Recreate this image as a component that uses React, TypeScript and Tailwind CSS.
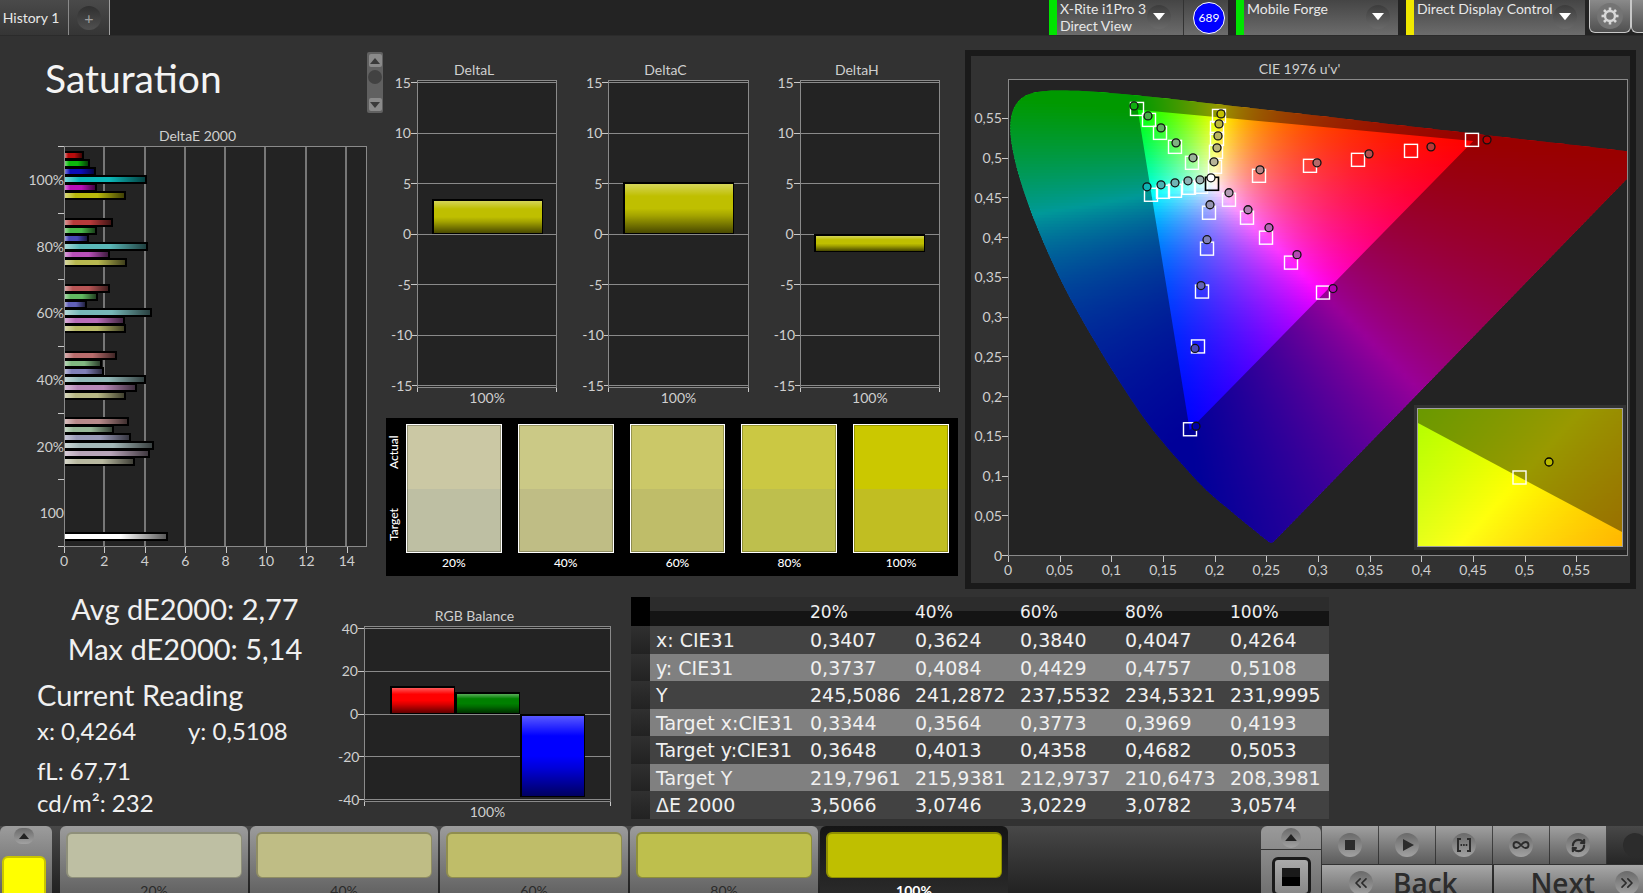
import { ReactNode } from "react";
import { ChevronsLeft, ChevronsRight, Infinity as InfinityIcon, RefreshCw } from "lucide-react";

const DE_GROUPS = [
    { label: "100%", bars: [[0.95, "#b80c0c"], [1.25, "#0cb80c"], [1.55, "#0c0cb8"], [4.08, "#0cb8b8"], [1.6, "#b80cb8"], [3.04, "#b8b80c"]] },
    { label: "80%", bars: [[2.4, "#b83a3a"], [1.6, "#48b848"], [1.2, "#4848b8"], [4.13, "#5ab8b8"], [2.25, "#b84fb8"], [3.08, "#b8b850"]] },
    { label: "60%", bars: [[2.25, "#b85555"], [1.65, "#60b860"], [1.1, "#6060b8"], [4.33, "#76b8b8"], [3.0, "#b86cb8"], [3.04, "#b8b866"]] },
    { label: "40%", bars: [[2.6, "#b86c6c"], [1.85, "#80b880"], [1.95, "#8080b8"], [4.03, "#92b8b8"], [3.6, "#b888b8"], [3.04, "#b8b885"]] },
    { label: "20%", bars: [[3.2, "#b88a8a"], [2.45, "#98b898"], [3.3, "#9a9ab8"], [4.43, "#a4b8b8"], [4.23, "#b8a4b8"], [3.49, "#b8b8a0"]] },
    { label: "100", bars: [[0, ""], [0, ""], [0, ""], [0, ""], [0, ""], [0, ""], [5.12, "#ffffff"]] },
] as { label: string; bars: [number, string][] }[];

const SWATCHES = [
    { label: "20%", actual: "#cbc8a4", target: "#bebfa3" },
    { label: "40%", actual: "#cbc986", target: "#bfbd85" },
    { label: "60%", actual: "#cbc868", target: "#bfbd69" },
    { label: "80%", actual: "#cbc843", target: "#bebf4d" },
    { label: "100%", actual: "#cbc800", target: "#c1be22" },
];

const PATCHES = [
    { label: "20%", color: "#bebfa3" },
    { label: "40%", color: "#bfbd85" },
    { label: "60%", color: "#bfbd69" },
    { label: "80%", color: "#bebf4d" },
    { label: "100%", color: "#bfbf00" },
];

const TABLE = [
    ["x: CIE31", "0,3407", "0,3624", "0,3840", "0,4047", "0,4264"],
    ["y: CIE31", "0,3737", "0,4084", "0,4429", "0,4757", "0,5108"],
    ["Y", "245,5086", "241,2872", "237,5532", "234,5321", "231,9995"],
    ["Target x:CIE31", "0,3344", "0,3564", "0,3773", "0,3969", "0,4193"],
    ["Target y:CIE31", "0,3648", "0,4013", "0,4358", "0,4682", "0,5053"],
    ["Target Y", "219,7961", "215,9381", "212,9737", "210,6473", "208,3981"],
    ["ΔE 2000", "3,5066", "3,0746", "3,0229", "3,0782", "3,0574"],
];

/* ---------- CIE helpers ---------- */

const PLOT_W = 618;
const PLOT_H = 476;

// spectral locus, CIE 1931 xy
const LOCUS = [
    [0.1741, 0.005], [0.1714, 0.0051], [0.1644, 0.0109], [0.1566, 0.0177], [0.144, 0.0297], [0.1241, 0.0578],
    [0.1096, 0.0868], [0.0913, 0.1327], [0.0687, 0.2007], [0.0454, 0.295], [0.0235, 0.4127], [0.0082, 0.5384],
    [0.0039, 0.6548], [0.0139, 0.7502], [0.0389, 0.812], [0.0743, 0.8338], [0.1142, 0.8262], [0.1547, 0.8059],
    [0.2296, 0.7543], [0.3016, 0.6923], [0.3731, 0.6245], [0.4441, 0.5547], [0.5125, 0.4866], [0.5752, 0.4242],
    [0.627, 0.3725], [0.6915, 0.3083], [0.719, 0.2809], [0.7347, 0.2653],
];

function toPlot(x: number, y: number) {
    const d = -2 * x + 12 * y + 3;
    return [((4 * x) / d / 0.6) * PLOT_W, PLOT_H - ((9 * y) / d / 0.6) * PLOT_H];
}

// brightest RGB mix for a chromaticity, left linear
function xyColor(x: number, y: number) {
    const yy = Math.max(y, 0.0001);
    const X = x / yy;
    const Z = (1 - x - yy) / yy;
    const rgb = [
        3.2406 * X - 1.5372 - 0.4986 * Z,
        -0.9689 * X + 1.8758 + 0.0415 * Z,
        0.0557 * X - 0.204 + 1.057 * Z,
    ].map((c) => Math.max(c, 0));
    const max = Math.max(...rgb) || 1;
    return `rgb(${rgb.map((c) => Math.round((255 * c) / max)).join(",")})`;
}

function uvColor(px: number, py: number) {
    const u = (px / PLOT_W) * 0.6;
    const v = ((PLOT_H - py) / PLOT_H) * 0.6;
    const d = 6 * u - 16 * v + 12;
    return xyColor((9 * u) / d, (4 * v) / d);
}

// Catmull-Rom through the locus points, closed by the purple line
function locusPath() {
    const p = LOCUS.map(([x, y]) => toPlot(x, y));
    let d = `M${p[0][0]} ${p[0][1]}`;
    for (let i = 0; i < p.length - 1; i++) {
        const a = p[Math.max(i - 1, 0)];
        const b = p[i];
        const c = p[i + 1];
        const e = p[Math.min(i + 2, p.length - 1)];
        d += `C${b[0] + (c[0] - a[0]) / 6} ${b[1] + (c[1] - a[1]) / 6} ${c[0] - (e[0] - b[0]) / 6} ${c[1] - (e[1] - b[1]) / 6} ${c[0]} ${c[1]}`;
    }
    return d + "Z";
}

const LOCUS_PATH = locusPath();
const GAMUT_PATH = "M" + [[0.64, 0.33], [0.3, 0.6], [0.15, 0.06]].map(([x, y]) => toPlot(x, y).join(" ")).join("L") + "Z";

// [target x, target y, measured x, measured y, fill]
const MARKERS: [number, number, number, number, string][] = [
    [128, 29, 125, 26, "#0fae0f"], [140, 40, 139, 36, "#48b048"], [151, 53, 152, 48, "#60b060"], [166, 67, 167, 63, "#80b080"], [183, 83, 184, 78, "#9ab49a"],
    [210, 36, 212, 34, "#c4c000"], [208, 48, 210, 44, "#bcb83c"], [208, 59, 209, 56, "#b8b460"], [207, 72, 208, 68, "#b8b47c"], [206, 87, 205, 82, "#b8b498"],
    [142, 115, 138, 107, "#10b4b4"], [154, 112, 152, 105, "#48b4b4"], [166, 111, 166, 103, "#70b4b4"], [180, 108, 179, 101, "#8cb4b4"], [192, 107, 191, 100, "#a0b4b4"],
    [220, 120, 220, 113, "#b49cb4"], [238, 138, 239, 130, "#b480b4"], [257, 158, 260, 148, "#b464b4"], [282, 183, 288, 175, "#b448b4"], [314, 213, 324, 209, "#b400b4"],
    [200, 133, 201, 125, "#9494b4"], [198, 169, 198, 160, "#8080b8"], [193, 212, 192, 206, "#6464b8"], [189, 267, 186, 269, "#4848b8"], [181, 350, 187, 347, "#0000a8"],
    [250, 96, 251, 90, "#b88484"], [301, 86, 308, 83, "#b86868"], [349, 80, 360, 74, "#b85050"], [402, 71, 422, 67, "#b83838"], [463, 60, 478, 60, "#b40000"],
];

function ColorField({ id, width, height, colorAt }: { id: string; width: number; height: number; colorAt: (x: number, y: number) => string }) {
    const rows = Array.from({ length: Math.ceil(height / 3) }, (_, i) => i * 3);
    const stops = Array.from({ length: 79 }, (_, i) => i / 78);
    return (
        <>
            <defs>
                {rows.map((y) => (
                    <linearGradient key={y} id={`${id}-${y}`}>
                        {stops.map((s) => (
                            <stop key={s} offset={s} stopColor={colorAt(s * width, y + 1)} />
                        ))}
                    </linearGradient>
                ))}
            </defs>
            {rows.map((y) => (
                <rect key={y} x={0} y={y} width={width} height={4} fill={`url(#${id}-${y})`} />
            ))}
        </>
    );
}

const pct = (n: number, total: number) => `${(n / total) * 100}%`;

/* ---------- chart parts ---------- */

function XAxis({ ticks, tail }: { ticks: string[]; tail?: boolean }) {
    return (
        <div className="flex h-[26px]">
            {ticks.map((t, i) => (
                <div key={t} className={tail && i === ticks.length - 1 ? "min-w-0 flex-1" : "min-w-0 flex-2"}>
                    <div className="h-1.5 w-px bg-[#c8c8c8]" />
                    <div className="flex w-0 justify-center leading-4">{t}</div>
                </div>
            ))}
        </div>
    );
}

function YAxis({ ticks }: { ticks: string[] }) {
    return (
        <div className="flex flex-col justify-between py-0.5">
            {ticks.map((t) => (
                <div key={t} className="flex h-px items-center justify-end">
                    <span className="leading-none">{t}</span>
                    <span className="h-px w-1.5 bg-[#c8c8c8]" />
                </div>
            ))}
        </div>
    );
}

type Bar = { value: number; color: string };

function BarChart({ title, ticks, max, bars, plotHeight }: { title: string; ticks: string[]; max: number; bars: Bar[]; plotHeight: string }) {
    return (
        <figure className="min-w-0 flex-1">
            <figcaption className="text-center leading-5">{title}</figcaption>
            <div className="grid grid-cols-[26px_1fr]">
                <YAxis ticks={ticks} />
                <div className={`relative flex flex-col justify-between border border-[#8a8a8a] bg-[#232323] py-px ${plotHeight}`}>
                    {ticks.map((t) => (
                        <div key={t} className="h-px bg-[#8a8a8a]" />
                    ))}
                    <div className="absolute inset-x-[10%] inset-y-0 flex">
                        {bars.map((b) => (
                            <div key={b.color} className="relative flex-1">
                                <div
                                    className="absolute inset-x-0 border-2 border-r border-b border-black bg-[linear-gradient(to_bottom,rgba(255,255,255,0.35),transparent_25%,transparent_50%,rgba(0,0,0,0.15)_65%,rgba(0,0,0,0.62))]"
                                    style={{
                                        backgroundColor: b.color,
                                        height: `${(Math.abs(b.value) / max) * 50}%`,
                                        top: b.value > 0 ? `${50 - (b.value / max) * 50}%` : "50%",
                                    }}
                                />
                            </div>
                        ))}
                    </div>
                </div>
                <div />
                <div className="h-5">
                    <div className="flex h-1 justify-between">
                        <span className="w-px bg-[#c8c8c8]" />
                        <span className="w-px bg-[#c8c8c8]" />
                    </div>
                    <div className="text-center leading-3">100%</div>
                </div>
            </div>
        </figure>
    );
}

function DeltaEChart() {
    return (
        <figure className="mr-[19px]">
            <figcaption className="pl-7 text-center leading-5">DeltaE 2000</figcaption>
            <div className="grid grid-cols-[64px_1fr]">
                <div className="flex flex-col">
                    {DE_GROUPS.map((g) => (
                        <div key={g.label} className="flex flex-1 flex-col items-end">
                            <span className="h-px w-1.5 bg-[#c8c8c8]" />
                            <span className="flex flex-1 items-center">{g.label}</span>
                        </div>
                    ))}
                    <span className="h-px w-1.5 self-end bg-[#c8c8c8]" />
                </div>
                <div className="relative h-[401px] border border-[#8a8a8a] bg-[#232323]">
                    <div className="flex h-full">
                        {[2, 4, 6, 8, 10, 12, 14].map((n) => (
                            <div key={n} className="flex-2 border-r-2 border-[#777]" />
                        ))}
                        <div className="flex-1" />
                    </div>
                    <div className="absolute inset-0 flex flex-col">
                        {DE_GROUPS.map((g) => (
                            <div key={g.label} className="flex-1 pt-1">
                                {g.bars.map(([value, color], i) => (
                                    <div key={i} className="h-2">
                                        {value > 0 && (
                                            <div
                                                className="h-[9px] border-y-2 border-r-2 border-black bg-[linear-gradient(to_right,rgba(255,255,255,0.45),transparent_18%,transparent_55%,rgba(0,0,0,0.65))]"
                                                style={{ width: `${(value / 15) * 100}%`, backgroundColor: color }}
                                            />
                                        )}
                                    </div>
                                ))}
                            </div>
                        ))}
                    </div>
                </div>
                <div />
                <XAxis ticks={["0", "2", "4", "6", "8", "10", "12", "14"]} tail />
            </div>
        </figure>
    );
}

function SwatchPanel() {
    return (
        <div className="flex bg-black pt-1.5 pr-[9px] pb-[3px] text-xs font-medium text-white">
            <div className="flex h-[129px] w-5 flex-col justify-between">
                <span className="flex h-14 rotate-180 items-center justify-center pl-1 [writing-mode:vertical-rl]">Actual</span>
                <span className="flex h-14 rotate-180 items-center justify-center pl-1 [writing-mode:vertical-rl]">Target</span>
            </div>
            <div className="grid flex-1 grid-cols-5 gap-4">
                {SWATCHES.map((s) => (
                    <div key={s.label}>
                        <div className="flex h-[129px] flex-col border border-white">
                            <div className="flex-1 border border-b-0 border-black/25" style={{ backgroundColor: s.actual }} />
                            <div className="flex-1 border border-t-0 border-black/25" style={{ backgroundColor: s.target }} />
                        </div>
                        <div className="text-center leading-5">{s.label}</div>
                    </div>
                ))}
            </div>
        </div>
    );
}

function CieInset() {
    const w = 204;
    const h = 137;
    const at = (x: number, y: number) => xyColor(0.3943 + (x / w) * 0.05, 0.5303 - (y / h) * 0.05);
    return (
        <div className="absolute right-px bottom-[5px] border-3 border-[#323232]">
            <svg viewBox="0 0 204 137" className="block h-[139px] w-[206px] border border-[#a0a0a0]" aria-hidden="true">
                <ColorField id="inset" width={w} height={h} colorAt={at} />
                <path d="M0 0H204V123L0 14Z" fill="#000" fillOpacity="0.4" />
                <rect x="95" y="62" width="13" height="13" fill="none" stroke="#fff" strokeWidth="1.4" />
                <circle cx="131" cy="53" r="4" fill="#b8b800" stroke="#000" strokeWidth="1.3" />
            </svg>
        </div>
    );
}

function CiePanel() {
    const x = ["0", "0,05", "0,1", "0,15", "0,2", "0,25", "0,3", "0,35", "0,4", "0,45", "0,5", "0,55"];
    return (
        <section className="mx-[7px] mt-3.5 border-[6px] border-[#1a1a1a] pt-[3px] pr-0.5 pb-px">
            <h2 className="text-center leading-5">CIE 1976 u'v'</h2>
            <div className="grid grid-cols-[37px_1fr]">
                <div className="flex flex-col">
                    {[...x].reverse().map((t) => (
                        <div key={t} className="flex flex-1 flex-col justify-end">
                            <div className="flex h-px items-center justify-end">
                                <span className="leading-none">{t}</span>
                                <span className="h-px w-1.5 bg-[#c8c8c8]" />
                            </div>
                        </div>
                    ))}
                </div>
                <div className="relative h-[477px] border border-[#8a8a8a] bg-[#232323]">
                    <svg viewBox="0 0 618 476" preserveAspectRatio="none" className="absolute inset-0 size-full" aria-hidden="true">
                        <clipPath id="locus">
                            <path d={LOCUS_PATH} />
                        </clipPath>
                        <g clipPath="url(#locus)">
                            <ColorField id="uv" width={PLOT_W} height={PLOT_H} colorAt={uvColor} />
                            <path d={`M0 0H618V476H0Z${GAMUT_PATH}`} fill="#000" fillOpacity="0.4" fillRule="evenodd" />
                        </g>
                    </svg>
                    <svg className="absolute inset-0 size-full" aria-hidden="true">
                        {MARKERS.map(([tx, ty], i) => (
                            <rect key={i} x={pct(tx, PLOT_W)} y={pct(ty, PLOT_H)} width="13" height="13" transform="translate(-6.5 -6.5)" fill="none" stroke="#fff" strokeWidth="1.4" />
                        ))}
                        <rect x={pct(203, PLOT_W)} y={pct(104, PLOT_H)} width="13" height="13" transform="translate(-6.5 -6.5)" fill="none" stroke="#000" strokeWidth="1.6" />
                        {MARKERS.map(([, , mx, my, fill], i) => (
                            <circle key={i} cx={pct(mx, PLOT_W)} cy={pct(my, PLOT_H)} r="4" fill={fill} stroke="#111" strokeWidth="1.3" />
                        ))}
                        <circle cx={pct(202, PLOT_W)} cy={pct(98, PLOT_H)} r="4" fill="#fff" stroke="#111" strokeWidth="1.3" />
                    </svg>
                    <CieInset />
                </div>
                <div />
                <XAxis ticks={x} />
            </div>
        </section>
    );
}

/* ---------- bars ---------- */

function Triangle({ up, className }: { up?: boolean; className: string }) {
    return (
        <svg viewBox="0 0 10 6" className={className} fill="currentColor" aria-hidden="true">
            <path d={up ? "M5 0 10 6H0Z" : "M5 6 10 0H0Z"} />
        </svg>
    );
}

function Gear() {
    return (
        <svg viewBox="-10 -10 20 20" className="size-5" fill="none" stroke="#d8d8d8" aria-hidden="true">
            <circle r="5" strokeWidth="2.4" />
            {[0, 45, 90, 135, 180, 225, 270, 315].map((a) => (
                <path key={a} d="M0-5.5V-8.5" strokeWidth="2.6" transform={`rotate(${a})`} />
            ))}
        </svg>
    );
}

function DeviceMenu({ lines, strip, className }: { lines: string[]; strip: string; className: string }) {
    return (
        <button className={`flex h-[35px] bg-linear-to-b from-[#454545] to-[#6c6c6c] text-left ${className}`}>
            <span className={`h-full w-2 shrink-0 ${strip}`} />
            <span className="min-w-0 flex-1 pl-[3px] leading-[17px] whitespace-nowrap">
                {lines.map((l) => (
                    <span key={l} className="block">{l}</span>
                ))}
            </span>
            <span className="mt-[5px] flex size-6 shrink-0 items-center justify-center rounded-full bg-linear-to-b from-[#3c3c3c] to-[#6a6a6a]">
                <Triangle className="w-3 text-white" />
            </span>
        </button>
    );
}

function TopBar() {
    return (
        <header className="flex h-9 shrink-0 justify-between overflow-hidden border-b border-[#2b2b2b] bg-[#232323] text-[#e8e8e8]">
            <div className="flex h-[35px] bg-linear-to-b from-[#4a4a4a] to-[#353535]">
                <button className="w-[69px] border-r border-[#8a8a8a] pr-1.5 whitespace-nowrap">History 1</button>
                <button aria-label="Add tab" className="flex w-[41px] items-center justify-center border-r border-[#a0a0a0]">
                    <span className="flex size-6 items-center justify-center rounded-full bg-linear-to-b from-[#303030] to-[#505050] text-base leading-none text-[#a0a0a0]">+</span>
                </button>
            </div>
            <div className="flex">
                <DeviceMenu lines={["X-Rite i1Pro 3", "Direct View"]} strip="bg-[#00e400]" className="w-[134px] pr-3" />
                <div className="mr-2 flex h-[35px] w-[45px] items-center justify-center border-l border-[#333] bg-linear-to-b from-[#454545] to-[#6c6c6c] pl-1.5">
                    <span className="flex size-8 items-center justify-center rounded-full border border-white bg-[#0000ff] text-xs text-white">689</span>
                </div>
                <DeviceMenu lines={["Mobile Forge"]} strip="bg-[#00e400]" className="mr-2 w-[162px] pr-2" />
                <DeviceMenu lines={["Direct Display Control"]} strip="bg-[#f0e800]" className="mr-1 w-[179px] pr-2" />
                <button aria-label="Settings" className="flex h-[33px] w-[42px] items-center justify-center rounded-b-md border border-t-0 border-[#c8c8c8] bg-linear-to-b from-[#8a8a8a] to-[#505050]">
                    <span className="flex size-[26px] items-center justify-center rounded-full bg-[#747474]">
                        <Gear />
                    </span>
                </button>
                <button aria-label="More" className="h-[33px] w-3 rounded-bl-md border border-t-0 border-r-0 border-[#c8c8c8] bg-linear-to-b from-[#8a8a8a] to-[#505050]" />
            </div>
        </header>
    );
}

function Knob({ children, className = "" }: { children?: ReactNode; className?: string }) {
    return (
        <span className={`flex size-6 shrink-0 items-center justify-center rounded-full bg-linear-to-b from-[#6a6a6a] to-[#a2a2a2] text-[#2c2c2c] ${className}`}>
            {children}
        </span>
    );
}

const TRANSPORT: { label: string; icon: ReactNode }[] = [
    { label: "Stop", icon: <span className="size-2.5 bg-current" /> },
    {
        label: "Play",
        icon: (
            <svg viewBox="0 0 12 12" className="ml-0.5 size-3" fill="currentColor">
                <path d="M1 0 12 6 1 12Z" />
            </svg>
        ),
    },
    {
        label: "Read range",
        icon: (
            <svg viewBox="0 0 16 14" className="h-3.5 w-4" fill="none" stroke="currentColor" strokeWidth="2">
                <path d="M5 1H2V13H5M11 1H14V13H11" />
                <path d="M4.5 7H11.5" strokeDasharray="1.6 1" />
            </svg>
        ),
    },
    { label: "Loop", icon: <InfinityIcon className="size-[18px]" strokeWidth={2.5} /> },
    { label: "Refresh", icon: <RefreshCw className="size-[15px]" strokeWidth={3.5} /> },
];

function BottomBar() {
    return (
        <footer className="flex h-[67px] shrink-0 overflow-hidden bg-linear-to-b from-[#484848] to-[#222]">
            <div className="mr-2 flex h-24 w-[52px] flex-col items-center rounded-t-md bg-linear-to-b from-[#9c9c9c] to-[#4c4c4c] pr-1">
                <button aria-label="Expand" className="mt-0.5 flex size-5 items-center justify-center rounded-full bg-linear-to-b from-[#6a6a6a] to-[#a2a2a2]">
                    <Triangle up className="w-2.5 text-[#222]" />
                </button>
                <div className="mt-3 h-20 w-11 rounded-t-md border-2 border-[#c8c400] bg-[#ffff00]" />
            </div>
            <div className="flex gap-0.5">
                {PATCHES.map((p, i) => (
                    <button
                        key={p.label}
                        className={
                            i === 4
                                ? "flex h-24 w-[188px] flex-col justify-start rounded-t-md bg-linear-to-b from-[#151515] to-[#333] px-1.5 pt-1.5 text-sm font-bold text-white"
                                : "flex h-24 w-[188px] flex-col justify-start rounded-t-md bg-linear-to-b from-[#9c9c9c] to-[#4c4c4c] px-1.5 pt-1.5 text-sm text-[#2a2a2a]"
                        }
                    >
                        <span className="h-[46px] w-full rounded-md border-2 border-r border-b border-black/25" style={{ backgroundColor: p.color }} />
                        <span className="w-full pt-[3px] text-center leading-5">{p.label}</span>
                    </button>
                ))}
            </div>
            <div className="ml-auto flex shrink-0">
                <div className="h-24 w-[60px] rounded-t-md bg-linear-to-b from-[#9a9a9a] to-[#606060]">
                    <div className="flex h-6 items-center justify-center border-b border-[#333]">
                        <button aria-label="Expand patches" className="flex size-5 items-center justify-center rounded-full bg-linear-to-b from-[#6a6a6a] to-[#a2a2a2]">
                            <Triangle up className="w-3 text-[#222]" />
                        </button>
                    </div>
                    <button aria-label="Patch window" className="mx-auto mt-[7px] flex size-[39px] items-center justify-center rounded-md border-3 border-[#1a1a1a] bg-linear-to-b from-[#aaa] to-[#888]">
                        <span className="size-[18px] bg-linear-to-b from-[#1a1a1a] from-50% to-black to-50%" />
                    </button>
                </div>
                <div className="w-[322px] shrink-0">
                    <div className="flex gap-px pl-px">
                        {TRANSPORT.map((t) => (
                            <button key={t.label} aria-label={t.label} className="flex h-[38px] w-14 items-center justify-center bg-linear-to-b from-[#a0a0a0] to-[#5c5c5c]">
                                <Knob>{t.icon}</Knob>
                            </button>
                        ))}
                        <div className="flex flex-1 items-center justify-end overflow-hidden bg-linear-to-b from-[#484848] to-[#262626]">
                            <span className="-mr-1 size-6 shrink-0 rounded-full bg-[#2c2c2c]" />
                        </div>
                    </div>
                    <div className="mt-px flex gap-0.5 pl-px font-['Open_Sans',sans-serif] text-[28px] leading-9 font-semibold text-[#2c2c2c]">
                        <button className="flex h-9 w-[170px] items-center bg-linear-to-b from-[#a8a8a8] to-[#666] pl-[27px]">
                            <Knob className="mr-5">
                                <ChevronsLeft className="size-5" strokeWidth={2} />
                            </Knob>
                            Back
                        </button>
                        <button className="flex h-9 flex-1 items-center justify-end bg-linear-to-b from-[#a8a8a8] to-[#666] pr-1">
                            Next
                            <Knob className="ml-5">
                                <ChevronsRight className="size-5" strokeWidth={2} />
                            </Knob>
                        </button>
                    </div>
                </div>
            </div>
        </footer>
    );
}

function ReadingTable() {
    return (
        <table className="w-[698px] table-fixed border-collapse self-start text-left font-['DejaVu_Sans',sans-serif] text-[19px] leading-6 text-[#f0f0f0]">
            <thead>
                <tr className="h-[29px] bg-[linear-gradient(#2c2c2c_50%,#141414_50%)] text-[17px]">
                    <th className="w-[19px] bg-black p-0" />
                    <th className="w-[154px] p-0" />
                    {SWATCHES.map((s) => (
                        <th key={s.label} className="p-0 pl-1.5 font-normal">{s.label}</th>
                    ))}
                </tr>
            </thead>
            <tbody>
                {TABLE.map(([name, ...cells]) => (
                    <tr key={name} className="h-[28px] bg-[#424242] even:h-[27px] even:bg-[#808080]">
                        <td className="bg-linear-to-b from-[#303030] to-[#222] p-0" />
                        <th className="p-0 pl-1.5 font-normal whitespace-nowrap">{name}</th>
                        {cells.map((c) => (
                            <td key={c} className="p-0 pl-1.5">{c}</td>
                        ))}
                    </tr>
                ))}
            </tbody>
        </table>
    );
}

export default function App() {
    const deltaTicks = ["15", "10", "5", "0", "-5", "-10", "-15"];
    return (
        <div className="flex h-screen flex-col overflow-hidden bg-[#323232] font-['Lato',sans-serif] text-sm text-[#cfcfcf]">
            <TopBar />

            <main className="min-h-0 flex-1">
                <div className="grid grid-cols-[386fr_572fr_685fr]">
                    <section>
                        <div className="flex h-[90px] justify-between pt-4 pr-[3px]">
                            <h1 className="pl-[45px] text-[39px] leading-[52px] text-[#f4f4f4]">Saturation</h1>
                            <div className="flex h-[61px] w-4 flex-col items-center justify-between rounded-xs bg-[#606060] py-0.5">
                                <button aria-label="Scroll up" className="flex h-[13px] w-[13px] items-center justify-center rounded-xs bg-[#8a8a8a]">
                                    <Triangle up className="w-2.5 text-[#3a3a3a]" />
                                </button>
                                <span className="mb-3 size-3.5 rounded-full bg-[#424242]" />
                                <button aria-label="Scroll down" className="flex h-[13px] w-[13px] items-center justify-center rounded-xs bg-[#8a8a8a]">
                                    <Triangle className="w-2.5 text-[#3a3a3a]" />
                                </button>
                            </div>
                        </div>
                        <DeltaEChart />
                    </section>

                    <section>
                        <div className="flex gap-[25px] pt-6 pr-[18px] pl-[5px]">
                            <BarChart title="DeltaL" ticks={deltaTicks} max={15} plotHeight="h-[308px]" bars={[{ value: 3.4, color: "#bfbf00" }]} />
                            <BarChart title="DeltaC" ticks={deltaTicks} max={15} plotHeight="h-[308px]" bars={[{ value: 5.1, color: "#bfbf00" }]} />
                            <BarChart title="DeltaH" ticks={deltaTicks} max={15} plotHeight="h-[308px]" bars={[{ value: -1.8, color: "#bfbf00" }]} />
                        </div>
                        <div className="mt-2.5">
                            <SwatchPanel />
                        </div>
                    </section>

                    <CiePanel />
                </div>

                <div className="flex">
                    <section className="w-[338px] shrink-0 text-[#f0f0f0]">
                        <div className="pl-8 text-center text-[29px] leading-10">
                            <p>Avg dE2000: 2,77</p>
                            <p>Max dE2000: 5,14</p>
                        </div>
                        <div className="pl-[37px] text-2xl leading-8">
                            <h2 className="pt-1.5 text-[29px] leading-10">Current Reading</h2>
                            <p className="flex">
                                <span className="w-[151px]">x: 0,4264</span>
                                <span>y: 0,5108</span>
                            </p>
                            <p className="pt-2">fL: 67,71</p>
                            <p>cd/m²: 232</p>
                        </div>
                    </section>
                    <div className="mr-5 flex w-[273px] shrink-0 pt-[17px]">
                        <BarChart
                            title="RGB Balance"
                            ticks={["40", "20", "0", "-20", "-40"]}
                            max={40}
                            plotHeight="h-[176px]"
                            bars={[
                                { value: 13, color: "#ff0000" },
                                { value: 10, color: "#008000" },
                                { value: -38, color: "#0000ff" },
                            ]}
                        />
                    </div>
                    <div className="pt-2">
                        <ReadingTable />
                    </div>
                </div>
            </main>

            <BottomBar />
        </div>
    );
}
